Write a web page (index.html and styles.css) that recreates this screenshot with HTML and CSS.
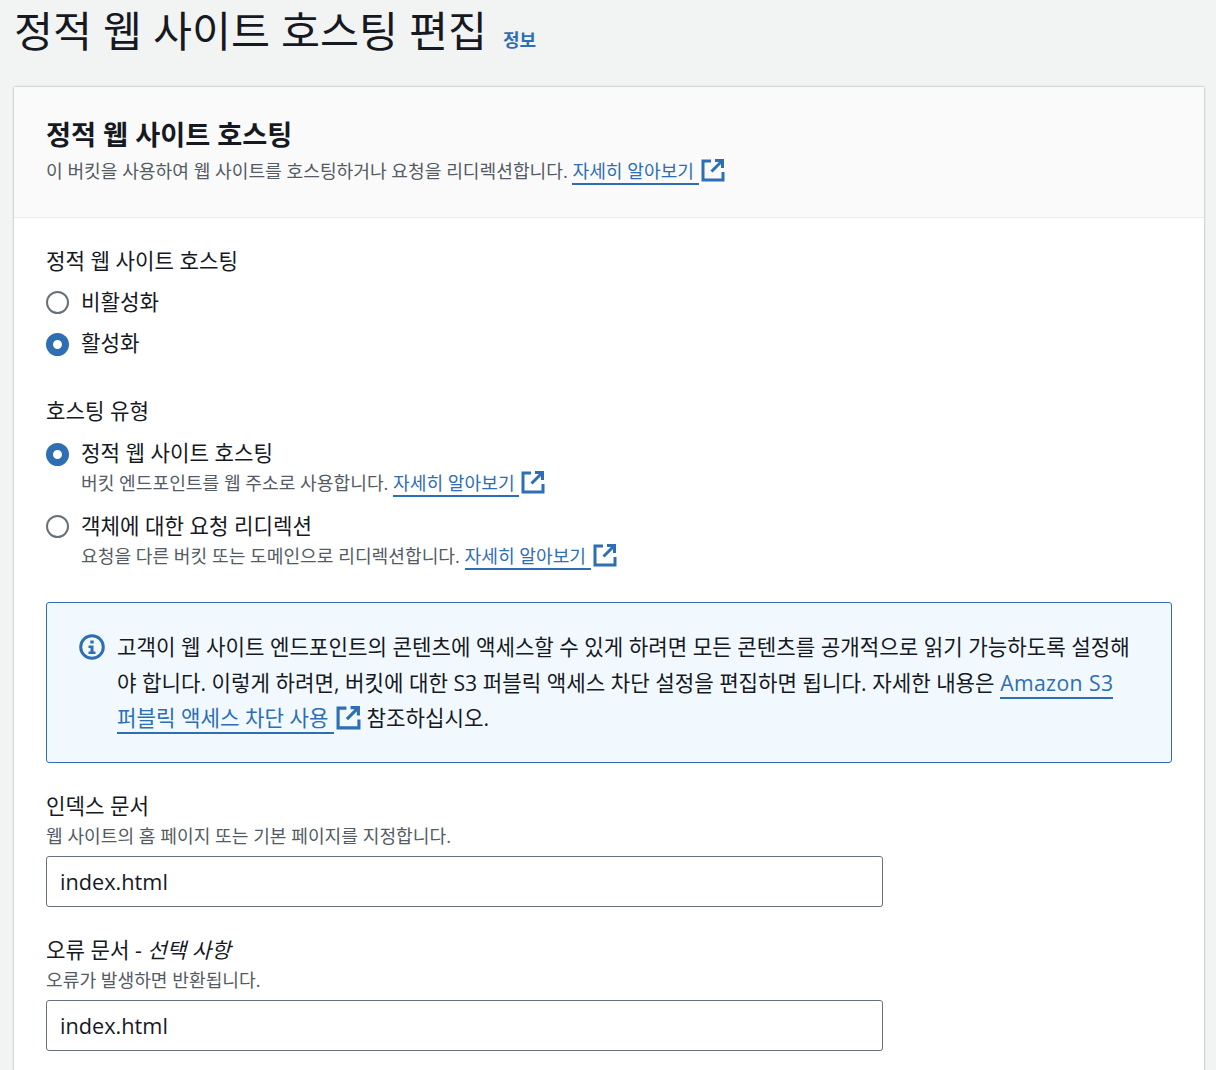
FILE: index.html
```html
<!DOCTYPE html>
<html lang="ko">
<head>
<meta charset="utf-8">
<title>정적 웹 사이트 호스팅 편집</title>
<link rel="stylesheet" href="styles.css">
</head>
<body>
<svg class="defs" width="0" height="0">
  <symbol id="ext" viewBox="0 0 24 24">
    <path d="M10 3H2v19h20v-8" fill="none" stroke="currentColor" stroke-width="3"/>
    <path d="M14 2.5h7.5V10M21 3 10.5 13.5" fill="none" stroke="currentColor" stroke-width="3"/>
  </symbol>
</svg>
<header class="page-head">
  <h1>정적 웹 사이트 호스팅 편집</h1>
  <a class="info" href="#">정보</a>
</header>
<main class="card">
  <div class="card-head">
    <h2>정적 웹 사이트 호스팅</h2>
    <p class="desc">이 버킷을 사용하여 웹 사이트를 호스팅하거나 요청을 리디렉션합니다. <a class="link" href="#">자세히 알아보기 </a><svg class="ext"><use href="#ext"/></svg></p>
  </div>
  <div class="card-body">
    <section class="group first">
      <div class="label">정적 웹 사이트 호스팅</div>
      <div class="radio"><span class="dot"></span><span class="r-text">비활성화</span></div>
      <div class="radio"><span class="dot on"></span><span class="r-text">활성화</span></div>
    </section>
    <section class="group second">
      <div class="label">호스팅 유형</div>
      <div class="radio r1"><span class="dot on"></span><div><div class="r-text">정적 웹 사이트 호스팅</div><p class="desc sub">버킷 엔드포인트를 웹 주소로 사용합니다. <a class="link" href="#">자세히 알아보기 </a><svg class="ext"><use href="#ext"/></svg></p></div></div>
      <div class="radio r2"><span class="dot"></span><div><div class="r-text">객체에 대한 요청 리디렉션</div><p class="desc sub">요청을 다른 버킷 또는 도메인으로 리디렉션합니다. <a class="link" href="#">자세히 알아보기 </a><svg class="ext"><use href="#ext"/></svg></p></div></div>
    </section>
    <section class="alert">
      <svg class="info-icon" viewBox="0 0 26 26"><circle cx="13" cy="13" r="11.3" fill="none" stroke="currentColor" stroke-width="3"/><rect x="11.3" y="6.5" width="3.4" height="3" fill="currentColor"/><path d="M9.5 11.5h5v6h2v2.4h-7v-2.4h2v-3.6h-2z" fill="currentColor"/></svg>
      <p>고객이 웹 사이트 엔드포인트의 콘텐츠에 액세스할 수 있게 하려면 모든 콘텐츠를 공개적으로 읽기 가능하도록 설정해야 합니다. 이렇게 하려면, 버킷에 대한 S3 퍼블릭 액세스 차단 설정을 편집하면 됩니다. 자세한 내용은 <a class="link latin" href="#">Amazon S3</a> <a class="link" href="#">퍼블릭 액세스 차단 사용 </a><svg class="ext"><use href="#ext"/></svg> 참조하십시오.</p>
    </section>
    <section class="field">
      <div class="label">인덱스 문서</div>
      <p class="desc hint">웹 사이트의 홈 페이지 또는 기본 페이지를 지정합니다.</p>
      <div class="input">index.html</div>
    </section>
    <section class="field">
      <div class="label">오류 문서 - <i>선택 사항</i></div>
      <p class="desc hint">오류가 발생하면 반환됩니다.</p>
      <div class="input">index.html</div>
    </section>
  </div>
</main>
</body>
</html>
```
FILE: styles.css
```css
* { box-sizing: border-box; }
html, body { height: 1070px; overflow: hidden; }
body {
  margin: 0;
  padding: 0 12px 0 14px;
  background: #f2f3f3;
  color: #16191f;
  font-family: "Open Sans", "Noto Sans CJK KR", sans-serif;
  font-size: 21.2px;
  line-height: 30px;
}
.defs { position: absolute; }
.page-head { display: flex; align-items: flex-end; height: 87px; padding-bottom: 28px; }
h1 { margin: 0; font-size: 42.4px; font-weight: 400; line-height: 57px; }
.info { margin: 0 0 7px 16px; color: #2e6eb4; font-size: 18px; font-weight: 700; line-height: 24px; text-decoration: none; }
.card { background: #fff; height: 1100px; box-shadow: 0 0 2px 0 rgba(0, 28, 36, .4); }
.card-head { height: 131px; padding: 30px 32px 0; background: #fafafa; border-bottom: 1px solid #eaeded; }
h2 { margin: 0; font-size: 27.2px; font-weight: 700; line-height: 36px; }
.desc { margin: 0; color: #545b64; font-size: 18.15px; line-height: 27px; }
.card-head .desc { margin-top: 5px; }
.link { color: #2e6eb4; text-decoration: none; border-bottom: 2px solid #2e6eb4; white-space: pre-wrap; word-break: keep-all; }
.latin { letter-spacing: .4px; }
.ext { width: 24px; height: 24px; margin-left: 2px; color: #2e6eb4; vertical-align: -4px; }
.card-body { padding: 28px 32px 0; }
.label { line-height: 30px; }
.radio { display: flex; gap: 12px; margin-top: 11px; }
.r1 { margin-top: 12px; }
.r2 { margin-top: 14px; }
.r-text { line-height: 30px; }
.dot { flex: none; width: 23px; height: 23px; margin-top: 4px; border: 2px solid #687078; border-radius: 50%; background: #fff; }
.dot.on { margin-top: 5px; border: 7px solid #2e6eb4; }
.second { margin-top: 38px; }
.sub { margin-top: 2px; }
.alert { display: flex; gap: 12px; height: 161px; margin-top: 32px; padding: 26px 32px 0; background: #f1f9fe; border: 1px solid #2e6eb4; border-radius: 3px; }
.alert p { margin: 0; font-size: 21.2px; line-height: 35.5px; }
.alert .ext { width: 25px; height: 25px; }
.info-icon { flex: none; width: 26px; height: 26px; margin-top: 5px; color: #2e6eb4; }
.field { margin-top: 28px; }
.hint { line-height: 30px; }
.input { width: 837px; height: 51px; margin-top: 5px; padding: 0 13px; border: 1px solid #687078; border-radius: 3px; line-height: 49px; font-size: 21.7px; font-weight: 500; background: #fff; }
```
